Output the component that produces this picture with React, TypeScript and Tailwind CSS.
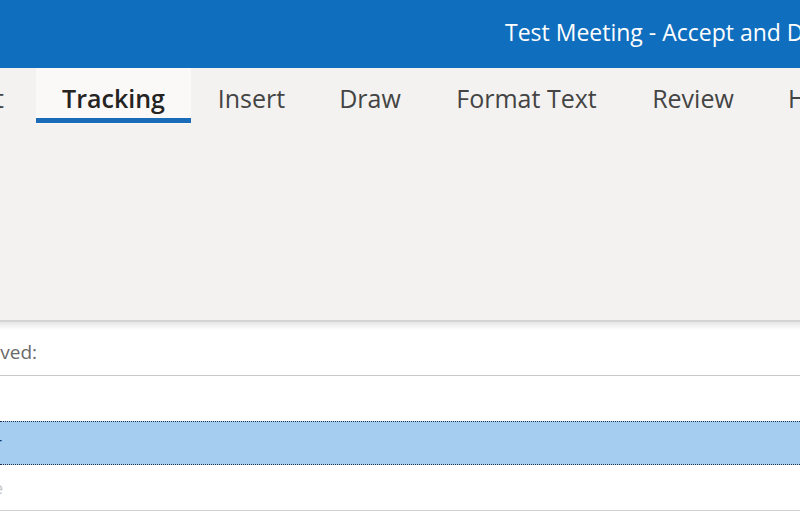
import React from "react";

const tabs: { label: string; w: string; active?: boolean }[] = [
  { label: "Tracking", w: "w-[155px]", active: true },
  { label: "Insert", w: "w-[121px]" },
  { label: "Draw", w: "w-[116px]" },
  { label: "Format Text", w: "w-[197px]" },
  { label: "Review", w: "w-[136px]" },
  { label: "Help", w: "w-[108px]" },
];

export default function App() {
  return (
    <div className="w-[800px] h-[525px] overflow-hidden bg-white font-['Open_Sans','Noto_Sans',sans-serif]">
      {/* Title bar */}
      <div className="h-[68px] bg-[#106ebe] pl-[505px] pt-[16px] overflow-hidden">
        <div className="text-[23px] leading-[32px] text-white whitespace-nowrap">
          Test Meeting - Accept and Decline
        </div>
      </div>

      {/* Ribbon */}
      <div className="h-[254px] bg-[#f3f2f1] border-b-2 border-[#d4d3d2]">
        <div className="flex h-[56px] whitespace-nowrap">
          <div className="w-[36px] shrink-0 flex justify-end pr-[32px] pt-[13px]">
            <span className="text-[25px] leading-[34px] text-[#444]">Scheduling Assistant</span>
          </div>
          {tabs.map((t) => (
            <div
              key={t.label}
              className={`${t.w} shrink-0 flex flex-col items-center pt-[13px] ${
                t.active ? "bg-[#faf9f8]" : ""
              }`}
            >
              <span
                className={`text-[25px] leading-[34px] ${
                  t.active ? "font-semibold text-[#252423]" : "text-[#444]"
                }`}
              >
                {t.label}
              </span>
              {t.active && <div className="mt-auto mb-[1px] h-[5px] w-full bg-[#1a6bb8]" />}
            </div>
          ))}
        </div>
      </div>

      {/* Info header */}
      <div className="h-[54px] border-b border-[#c8c8c8]">
        <div className="h-[8px] bg-gradient-to-b from-[#e6e6e6] to-white" />
        <div className="w-[37px] flex justify-end mt-[10px] whitespace-nowrap">
          <span className="text-[19px] leading-[25px] text-[#6a6a6a]">
            The following responses to this meeting have been received:
          </span>
        </div>
      </div>

      {/* Rows */}
      <div className="h-[45px] bg-white" />
      <div className="h-[44px] bg-[#a4cdef] border-y border-dotted border-[#23344a] flex items-center">
        <div className="w-[2px] flex justify-end whitespace-nowrap">
          <span className="text-[17px] leading-[22px] text-[#1b3a5c]">Test User</span>
        </div>
      </div>
      <div className="h-[46px] bg-white border-b border-[#d0d0d0] flex items-center">
        <div className="w-[3px] flex justify-end whitespace-nowrap">
          <span className="text-[17px] leading-[22px] text-[#c4c4c4]">None</span>
        </div>
      </div>
    </div>
  );
}
